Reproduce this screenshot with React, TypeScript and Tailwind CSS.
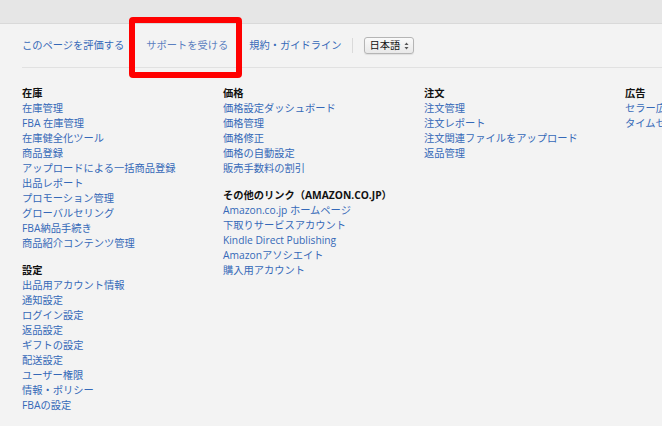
import React from 'react';

const font = { fontFamily: '"Open Sans", "Noto Sans CJK JP", sans-serif' };

type Section = { title: string; links: string[] };

const columns: Section[][] = [
  [
    {
      title: '在庫',
      links: [
        '在庫管理',
        'FBA 在庫管理',
        '在庫健全化ツール',
        '商品登録',
        'アップロードによる一括商品登録',
        '出品レポート',
        'プロモーション管理',
        'グローバルセリング',
        'FBA納品手続き',
        '商品紹介コンテンツ管理',
      ],
    },
    {
      title: '設定',
      links: [
        '出品用アカウント情報',
        '通知設定',
        'ログイン設定',
        '返品設定',
        'ギフトの設定',
        '配送設定',
        'ユーザー権限',
        '情報・ポリシー',
        'FBAの設定',
      ],
    },
  ],
  [
    {
      title: '価格',
      links: ['価格設定ダッシュボード', '価格管理', '価格修正', '価格の自動設定', '販売手数料の割引'],
    },
    {
      title: 'その他のリンク（AMAZON.CO.JP）',
      links: [
        'Amazon.co.jp ホームページ',
        '下取りサービスアカウント',
        'Kindle Direct Publishing',
        'Amazonアソシエイト',
        '購入用アカウント',
      ],
    },
  ],
  [
    {
      title: '注文',
      links: ['注文管理', '注文レポート', '注文関連ファイルをアップロード', '返品管理'],
    },
  ],
  [
    {
      title: '広告',
      links: ['セラー広告キャンペーンマネージャー', 'タイムセールダッシュボード'],
    },
  ],
];

function SortArrows() {
  return (
    <svg width="5" height="8" viewBox="0 0 5 8" className="ml-[4px]">
      <path d="M2.5 0.5 L4.5 3 L0.5 3 Z" fill="#555" />
      <path d="M2.5 7.5 L4.5 5 L0.5 5 Z" fill="#555" />
    </svg>
  );
}

export default function App() {
  return (
    <div
      className="relative h-[426px] w-[662px] overflow-hidden bg-[#f3f3f3] text-[10.25px] leading-[15px]"
      style={font}
    >
      <div className="h-[24px] border-b border-[#d9d9d9] bg-[#e6e6e6]" />

      <div className="pl-[22px]">
        {/* footer nav */}
        <div className="flex h-[44px] items-center border-b border-[#e1e1e1] whitespace-nowrap">
          <a className="text-[#3569b8]">このページを評価する</a>
          <a className="ml-[22px] text-[#5b7fc0]">サポートを受ける</a>
          <a className="ml-[21px] text-[#3569b8]">規約・ガイドライン</a>
          <div className="ml-[10px] h-[15px] w-px bg-[#dadada]" />
          <div className="ml-[11px] flex h-[17px] w-[50px] items-center rounded-[3px] border border-[#b5b5b5] bg-gradient-to-b from-[#fafafa] to-[#e9e9e9] pl-[5px] text-[#111] shadow-[0_1px_1px_rgba(0,0,0,0.08)]">
            日本語
            <SortArrows />
          </div>
        </div>

        {/* link columns */}
        <div className="flex pt-[18px]">
          {columns.map((sections, i) => (
            <div key={i} className="flex w-[201px] shrink-0 flex-col gap-[12px] whitespace-nowrap">
              {sections.map((s) => (
                <div key={s.title} className="flex flex-col">
                  <div className="font-bold text-[#111]">{s.title}</div>
                  {s.links.map((l) => (
                    <a key={l} className="text-[#3569b8]">
                      {l}
                    </a>
                  ))}
                </div>
              ))}
            </div>
          ))}
        </div>
      </div>

      {/* highlight box */}
      <div className="absolute left-[129px] top-[17px] h-[61px] w-[113px] rounded-[4px] border-[6px] border-[#ff0000]" />
    </div>
  );
}
